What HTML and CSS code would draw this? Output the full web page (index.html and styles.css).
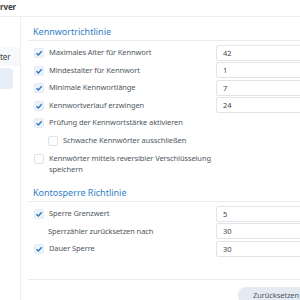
FILE: index.html
```html
<!DOCTYPE html>
<html lang="de">
<head>
    <meta charset="UTF-8">
    <title>Kennwortrichtlinie</title>
    <link rel="stylesheet" href="styles.css">
</head>
<body>
    <div class="window">
        <div class="titlebar">rver</div>
        <div class="layout">
            <div class="sidebar">
                <div class="nav-item">ter</div>
                <div class="nav-item active"></div>
            </div>
            <div class="main">
                <h2 class="section-title">Kennwortrichtlinie</h2>
                <div class="row">
                    <label class="check"><span class="box on"><svg viewBox="0 0 10 10"><path d="M1.8 5.2 L4.2 7.4 L8.4 2.8"/></svg></span>Maximales Alter für Kennwort</label>
                    <div class="field">42</div>
                </div>
                <div class="row">
                    <label class="check"><span class="box on"><svg viewBox="0 0 10 10"><path d="M1.8 5.2 L4.2 7.4 L8.4 2.8"/></svg></span>Mindestalter für Kennwort</label>
                    <div class="field">1</div>
                </div>
                <div class="row">
                    <label class="check"><span class="box on"><svg viewBox="0 0 10 10"><path d="M1.8 5.2 L4.2 7.4 L8.4 2.8"/></svg></span>Minimale Kennwortlänge</label>
                    <div class="field">7</div>
                </div>
                <div class="row">
                    <label class="check"><span class="box on"><svg viewBox="0 0 10 10"><path d="M1.8 5.2 L4.2 7.4 L8.4 2.8"/></svg></span>Kennwortverlauf erzwingen</label>
                    <div class="field">24</div>
                </div>
                <div class="row">
                    <label class="check"><span class="box on"><svg viewBox="0 0 10 10"><path d="M1.8 5.2 L4.2 7.4 L8.4 2.8"/></svg></span>Prüfung der Kennwortstärke aktivieren</label>
                </div>
                <div class="row sub">
                    <label class="check"><span class="box"></span>Schwache Kennwörter ausschließen</label>
                </div>
                <div class="row tall">
                    <label class="check"><span class="box"></span>Kennwörter mittels reversibler Verschlüsselung speichern</label>
                </div>

                <h2 class="section-title second">Kontosperre Richtlinie</h2>
                <div class="row">
                    <label class="check"><span class="box on"><svg viewBox="0 0 10 10"><path d="M1.8 5.2 L4.2 7.4 L8.4 2.8"/></svg></span>Sperre Grenzwert</label>
                    <div class="field">5</div>
                </div>
                <div class="row">
                    <label class="check plain">Sperrzähler zurücksetzen nach</label>
                    <div class="field">30</div>
                </div>
                <div class="row">
                    <label class="check"><span class="box on"><svg viewBox="0 0 10 10"><path d="M1.8 5.2 L4.2 7.4 L8.4 2.8"/></svg></span>Dauer Sperre</label>
                    <div class="field">30</div>
                </div>

                <div class="footer">
                    <button class="button">Zurücksetzen</button>
                </div>
            </div>
        </div>
    </div>
</body>
</html>
```

FILE: styles.css
```css
body {
    margin: 0;
    padding: 0;
    background-color: #fff;
    font-family: "Noto Sans", sans-serif;
    font-size: 7.5px;
    letter-spacing: -0.1px;
    color: #505862;
}
.window {
    width: 300px;
    height: 300px;
    overflow: hidden;
}
.titlebar {
    height: 16px;
    line-height: 14px;
    font-size: 8px;
    font-weight: bold;
    color: #3a3f47;
    border-bottom: 1px solid #eceff2;
}
.layout {
    display: grid;
    grid-template-columns: 21px 1fr;
    height: 283px;
}
.sidebar {
    border-right: 1px solid #eceff2;
    padding-top: 30px;
}
.nav-item {
    height: 19px;
    line-height: 19px;
    font-size: 8px;
    color: #3a3f47;
    background-color: #f6f8fb;
}
.nav-item.active {
    height: 21px;
    margin-top: 2px;
    margin-right: 7px;
    background-color: #e6eef8;
    border-radius: 0 4px 4px 0;
}
.main {
    padding-left: 7px;
    padding-top: 8px;
}
.section-title {
    margin: 0 0 3px;
    padding: 0 0 1px 5px;
    font-size: 9px;
    font-weight: normal;
    letter-spacing: 0;
    line-height: 14px;
    color: #2f7ec7;
    border-bottom: 1px solid #e8ecf0;
}
.section-title.second {
    margin-top: 9px;
}
.row {
    display: flex;
    align-items: center;
    height: 17.5px;
}
.row.tall {
    height: 28px;
    align-items: flex-start;
    padding-top: 4px;
    box-sizing: border-box;
}
.check {
    display: flex;
    align-items: flex-start;
    width: 188px;
    padding-left: 6px;
    box-sizing: border-box;
    line-height: 11px;
}
.check.plain {
    padding-left: 20px;
}
.row.sub .check {
    padding-left: 20px;
}
.row.tall .check {
    width: 186px;
}
.box {
    flex: none;
    width: 8px;
    height: 8px;
    margin: 1px 5px 0 0;
    border: 1px solid #dde2e8;
    border-radius: 2px;
    background-color: #fff;
}
.box.on {
    border-color: #e3ebf4;
    background-color: #eef3f9;
}
.box svg {
    display: block;
    width: 8px;
    height: 8px;
    fill: none;
    stroke: #2577c2;
    stroke-width: 1.7;
}
.field {
    width: 100px;
    height: 14px;
    line-height: 14px;
    padding-left: 6px;
    border: 1px solid #e1e5ea;
    border-radius: 2px;
    color: #444;
}
.footer {
    margin-top: 21px;
    border-top: 1px solid #e8ecf0;
    padding-top: 7px;
    padding-left: 210px;
}
.button {
    display: block;
    width: 80px;
    height: 17px;
    padding: 0 0 0 15px;
    text-align: left;
    font-family: inherit;
    font-size: 7.5px;
    letter-spacing: -0.1px;
    color: #505862;
    background-color: #e4eaf2;
    border: none;
    border-radius: 8px;
}
```
